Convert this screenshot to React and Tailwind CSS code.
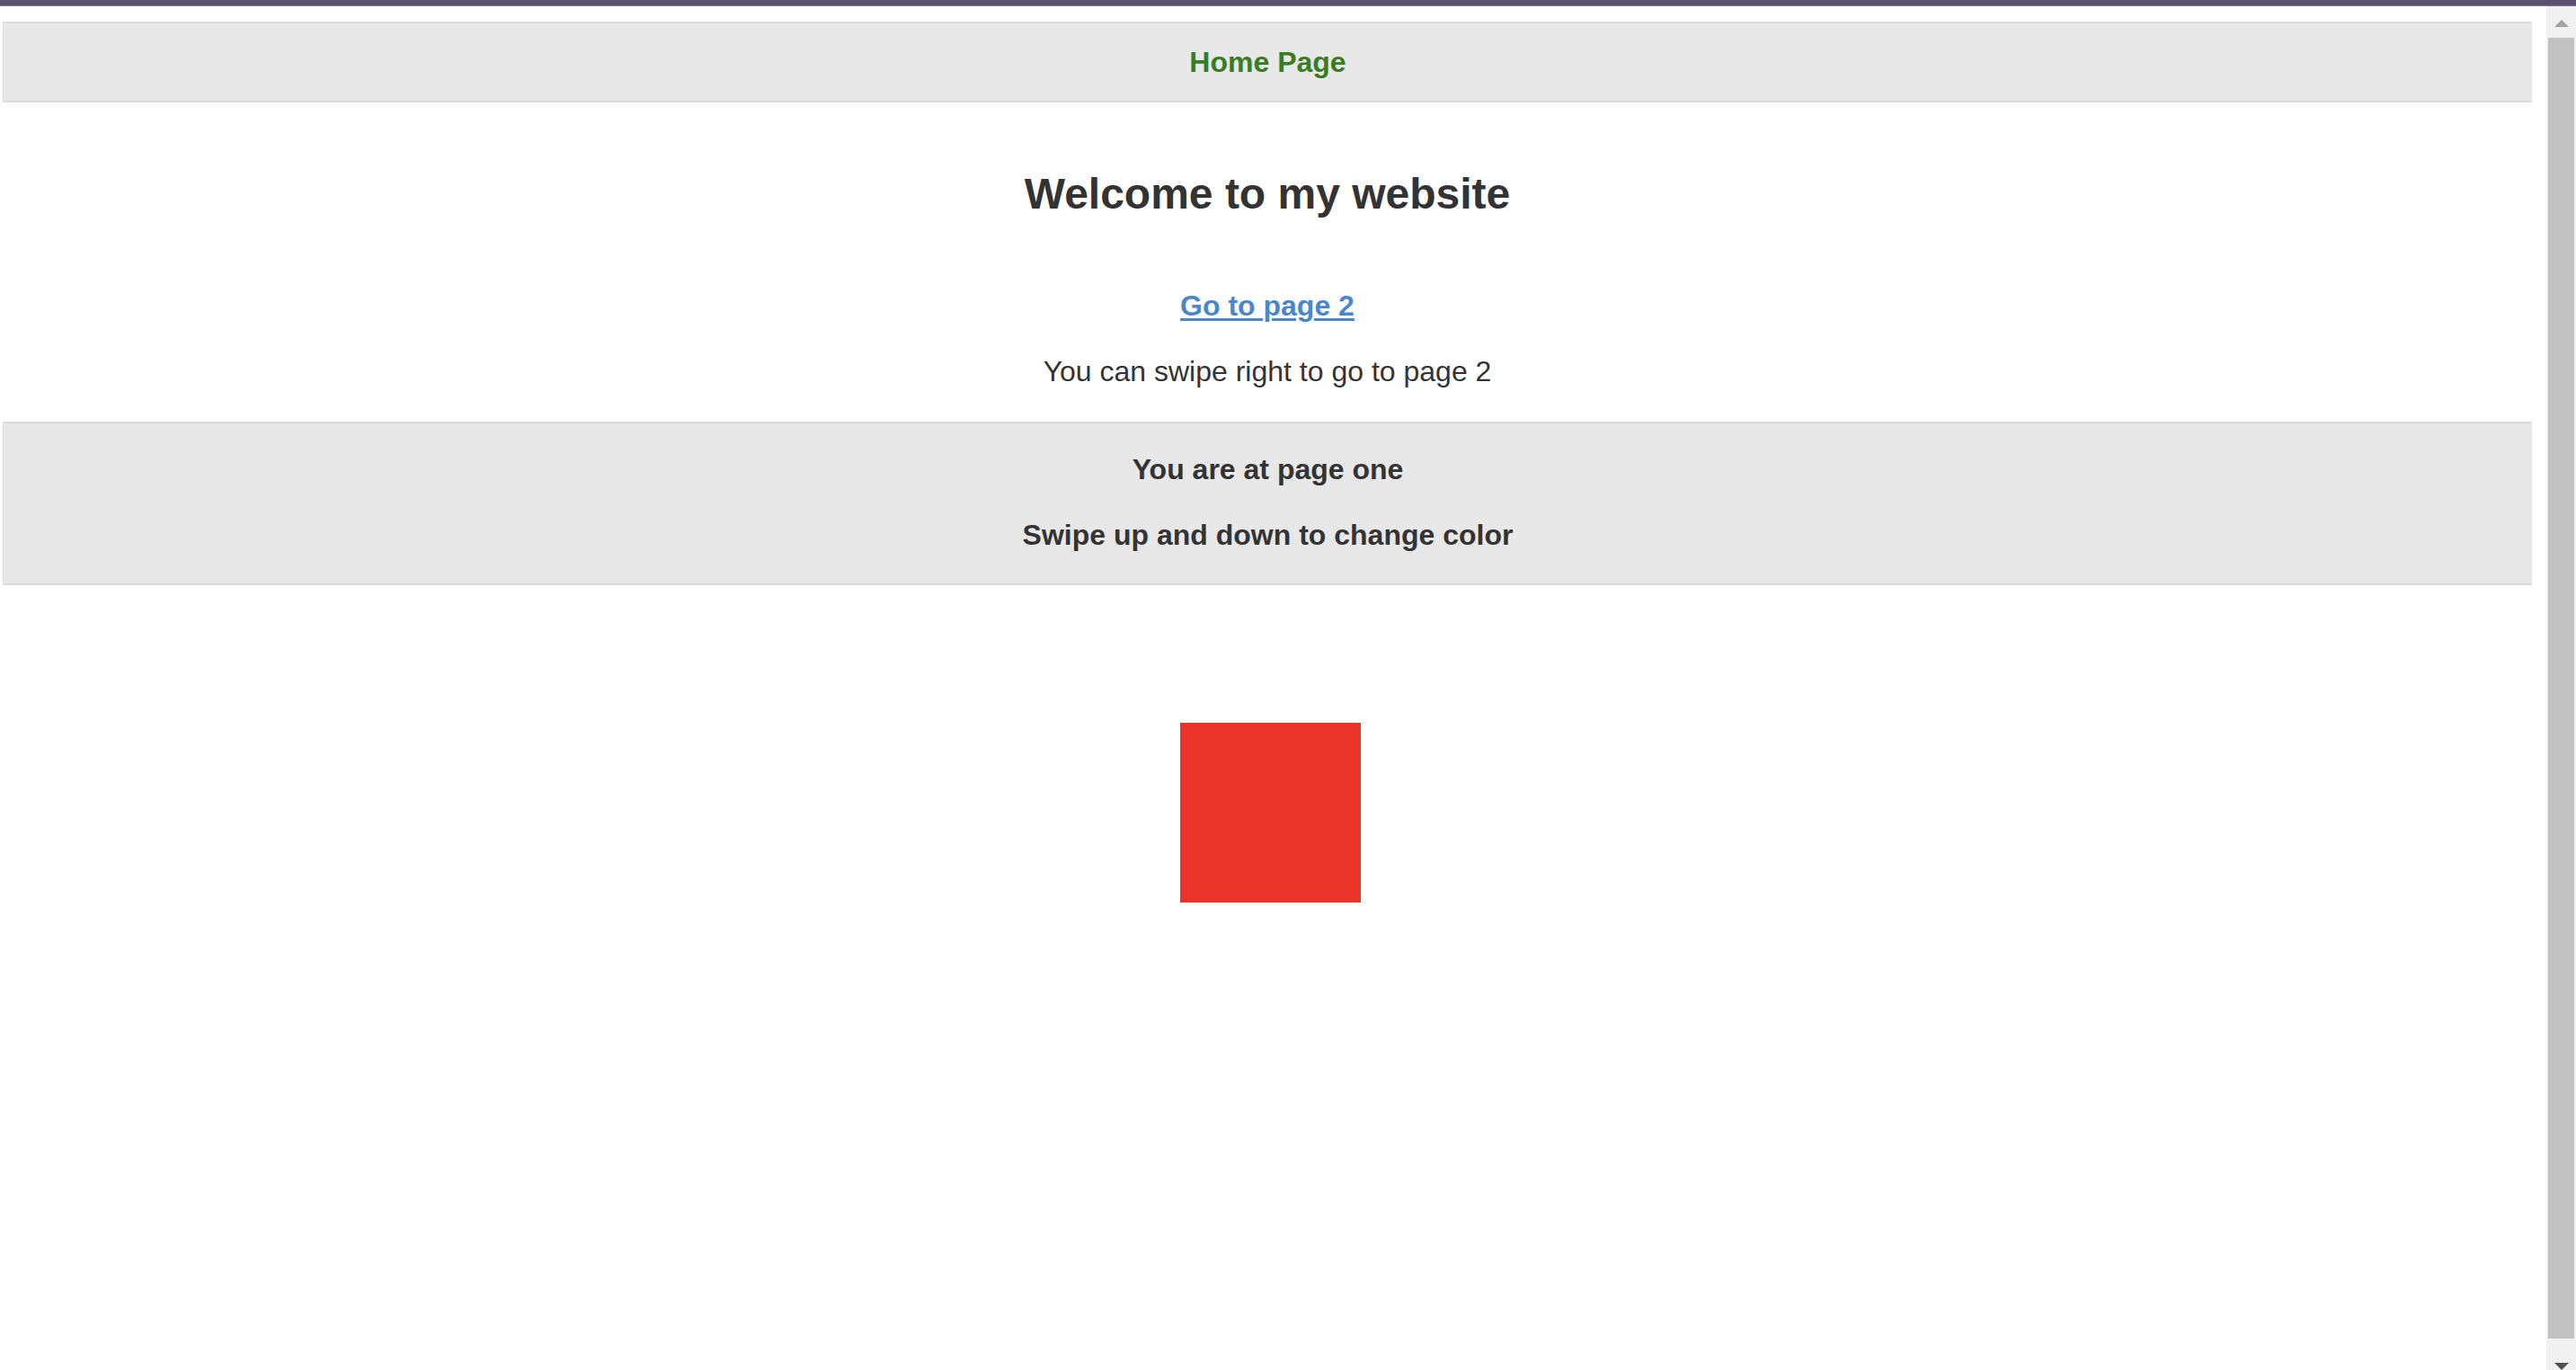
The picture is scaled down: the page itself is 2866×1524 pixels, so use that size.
import React from "react";

const font = { fontFamily: '"Liberation Sans", Arial, sans-serif' };

const ScrollBar = () => (
  <div className="flex h-[1517px] w-[33px] shrink-0 flex-col bg-[#f0f0f0]">
    <div className="flex h-[35px] items-start justify-center pt-[15px]">
      <svg width="16" height="8" viewBox="0 0 16 8">
        <path d="M8 0 L16 8 L0 8 Z" fill="#a3a3a3" />
      </svg>
    </div>
    <div className="mx-[2px] flex-1 bg-[#c1c1c1]" />
    <div className="flex h-[35px] items-end justify-center">
      <svg width="16" height="8" viewBox="0 0 16 8">
        <path d="M0 0 L16 0 L8 8 Z" fill="#505050" />
      </svg>
    </div>
  </div>
);

export default function App() {
  return (
    <div className="h-[1524px] w-[2866px] overflow-hidden bg-white" style={font}>
      <div className="h-[6px] bg-[#5b5070]" />
      <div className="h-px bg-[#85799a]" />
      <div className="flex">
        <main className="w-[2833px] shrink-0 pl-[3px] text-[#333333]">
          <div className="w-[2814px]">
            <header className="mt-[17px] flex h-[90px] items-center justify-center border-y-2 border-l border-[#dcdcdc] bg-[#e8e8e8]">
              <span className="text-[32px] font-bold leading-[37px] text-[#3a7d1f]">
                Home Page
              </span>
            </header>

            <h1 className="mt-[74px] text-center text-[48px] font-bold leading-[56px]">
              Welcome to my website
            </h1>

            <p className="mt-[78px] text-center text-[32px] font-bold leading-[37px]">
              <a href="#page2" className="text-[#4a87ca] underline decoration-[3px] underline-offset-[3px]">
                Go to page 2
              </a>
            </p>

            <p className="mt-[36px] text-center text-[32px] leading-[37px]">
              You can swipe right to go to page 2
            </p>

            <section className="mt-[37px] border-y-2 border-l border-[#dcdcdc] bg-[#e8e8e8] pt-[33px] pb-[35px] text-center text-[32px] font-bold leading-[37px]">
              <p>You are at page one</p>
              <p className="mt-[36px]">Swipe up and down to change color</p>
            </section>

            <div className="mt-[153px] flex justify-center pl-[7px]">
              <div className="h-[200px] w-[201px] bg-[#e9342a]" />
            </div>
          </div>
        </main>
        <ScrollBar />
      </div>
    </div>
  );
}
